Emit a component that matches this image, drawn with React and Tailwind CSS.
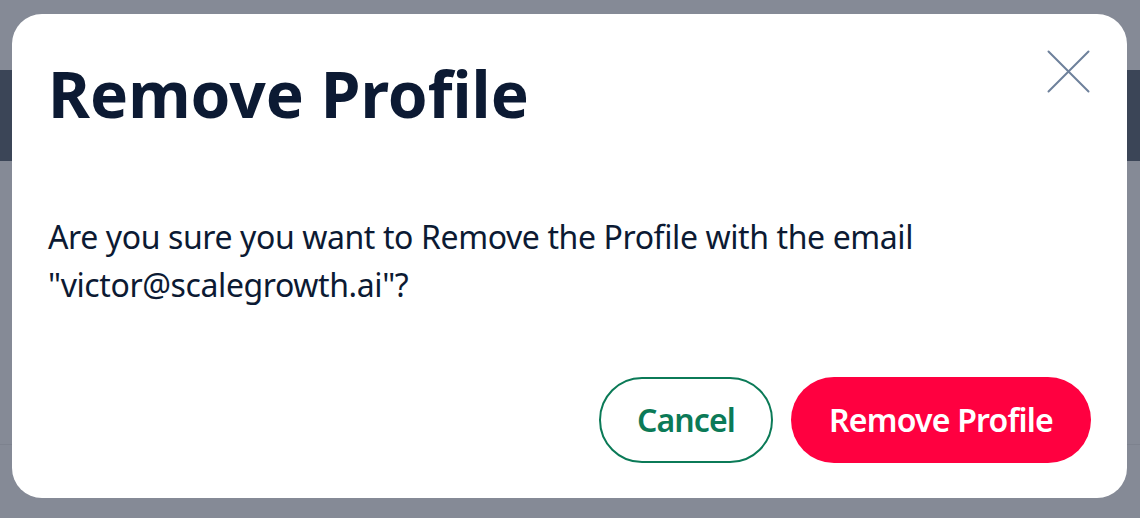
import React from 'react';

const CloseIcon = () => (
  <svg width="43" height="43" viewBox="0 0 43 43" fill="none" stroke="#6e819b" strokeWidth="2" strokeLinecap="round">
    <path d="M1.5 1.5L41.5 41.5M41.5 1.5L1.5 41.5" />
  </svg>
);

const App = () => {
  return (
    <div className="relative h-[518px] w-full overflow-hidden bg-[#858a96] font-['Noto_Sans',sans-serif]">
      {/* page behind the overlay */}
      <div className="h-[70px]" />
      <div className="h-[91px] bg-[#3b4557]" />
      <div className="h-[283px]" />
      <div className="h-px bg-[#7d828e]" />

      {/* Dialog */}
      <div className="absolute inset-0 pl-[12px] pr-[13px] pt-[14px] pb-[20px]">
        <div className="relative flex h-full flex-col rounded-[30px] bg-white px-[36px]">
          <button className="absolute right-[37px] top-[36px]">
            <CloseIcon />
          </button>
          <h2 className="mt-[32px] text-[64px] font-bold leading-[96px] text-[#0c1a33]">
            Remove Profile
          </h2>
          <p className="mt-[71px] max-w-[900px] text-[32px] leading-[48px] tracking-[-0.4px] text-[#0c1a33]">
            Are you sure you want to Remove the Profile with the email "victor@scalegrowth.ai"?
          </p>
          <div className="mt-auto mb-[35px] flex justify-end gap-[18px]">
            <button className="h-[86px] w-[174px] rounded-full border-2 border-[#0b7a57] text-[32px] font-semibold tracking-[-0.9px] text-[#0b7a57]">
              Cancel
            </button>
            <button className="h-[86px] w-[300px] rounded-full bg-[#ff0040] text-[32px] font-semibold tracking-[-0.8px] text-white">
              Remove Profile
            </button>
          </div>
        </div>
      </div>
    </div>
  );
};

export default App;
